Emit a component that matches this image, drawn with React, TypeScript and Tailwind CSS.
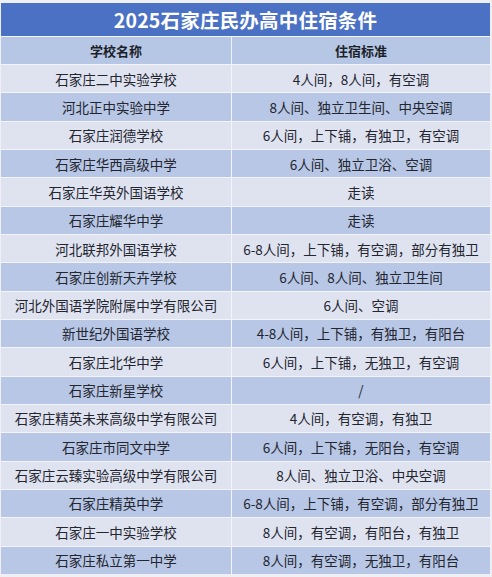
import React from "react";

const rows: [string, string][] = [
  ["石家庄二中实验学校", "4人间，8人间，有空调"],
  ["河北正中实验中学", "8人间、独立卫生间、中央空调"],
  ["石家庄润德学校", "6人间，上下铺，有独卫，有空调"],
  ["石家庄华西高级中学", "6人间、独立卫浴、空调"],
  ["石家庄华英外国语学校", "走读"],
  ["石家庄耀华中学", "走读"],
  ["河北联邦外国语学校", "6-8人间，上下铺，有空调，部分有独卫"],
  ["石家庄创新天卉学校", "6人间、8人间、独立卫生间"],
  ["河北外国语学院附属中学有限公司", "6人间、空调"],
  ["新世纪外国语学校", "4-8人间，上下铺，有独卫，有阳台"],
  ["石家庄北华中学", "6人间，上下铺，无独卫，有空调"],
  ["石家庄新星学校", "/"],
  ["石家庄精英未来高级中学有限公司", "4人间，有空调，有独卫"],
  ["石家庄市同文中学", "6人间，上下铺，无阳台，有空调"],
  ["石家庄云臻实验高级中学有限公司", "8人间、独立卫浴、中央空调"],
  ["石家庄精英中学", "6-8人间，上下铺，有空调，部分有独卫"],
  ["石家庄一中实验学校", "8人间，有空调，有阳台，有独卫"],
  ["石家庄私立第一中学", "8人间，有空调，无独卫，有阳台"],
];

export default function App() {
  return (
    <div
      className="w-[492px] h-[577px] bg-[#eef0f6] pt-[3px] pl-[1px] pr-[2px] overflow-hidden"
      style={{ fontFamily: '"Noto Sans CJK SC", "Noto Sans", sans-serif' }}
    >
      <div className="h-[33px] bg-[#4a71c4] flex items-center justify-center text-white font-bold text-[19.5px] tracking-[0.2px]">
        2025石家庄民办高中住宿条件
      </div>
      <div className="h-[1px] bg-[#f4f6fb]" />
      <div className="grid grid-cols-[231px_1fr] h-[27px] bg-[#b6c7e6] text-[#1d1f29] font-bold text-[13px]">
        <div className="flex items-center justify-center border-r border-[#eef2fa]">学校名称</div>
        <div className="flex items-center justify-center">住宿标准</div>
      </div>
      {rows.map(([a, b], i) => (
        <div
          key={i}
          className={
            "grid grid-cols-[231px_1fr] h-[28.33px] border-t border-[#f2f4fa] text-[13.5px] text-[#23252f] " +
            (i % 2 === 0 ? "bg-[#dfe3f0]" : "bg-[#b7c7e5]")
          }
        >
          <div className="flex items-center justify-center border-r border-[#f2f4fa] whitespace-nowrap">{a}</div>
          <div className="flex items-center justify-center whitespace-nowrap">{b}</div>
        </div>
      ))}
    </div>
  );
}
